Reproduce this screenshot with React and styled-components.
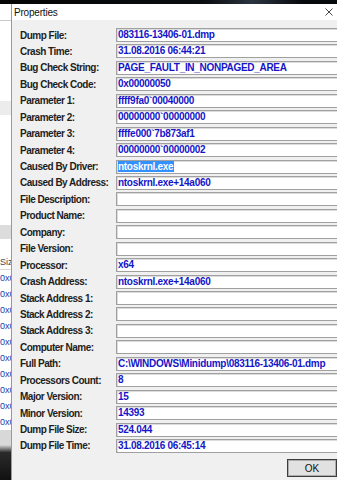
import React from "react";
import styled, { createGlobalStyle } from "styled-components";

const GlobalStyle = createGlobalStyle`
  html, body { margin: 0; padding: 0; background: #0b0d10; overflow: hidden; }
  * { box-sizing: border-box; }
`;

const Screen = styled.div`
  width: 337px;
  height: 480px;
  display: flex;
  flex-direction: column;
  overflow: hidden;
  font-family: "Liberation Sans", Arial, sans-serif;
`;

const TopStrip = styled.div`
  height: 4px;
  flex: none;
  background: linear-gradient(90deg, #050505 0%, #0a0c0e 60%, #2a3440 75%, #07090b 90%);
`;

const Main = styled.div`
  flex: 1;
  display: flex;
  min-height: 0;
`;

const BackWindow = styled.div`
  width: 11px;
  flex: none;
  display: flex;
  flex-direction: column;
  background: #ffffff;
  overflow: hidden;
`;

const BackBand = styled.div`
  height: ${(p) => p.$h}px;
  flex: none;
  background: ${(p) => p.$bg || "#ffffff"};
  border-bottom: ${(p) => (p.$line ? "1px solid #c8c8c8" : "none")};
`;

const BackCell = styled.div`
  height: 16px;
  flex: none;
  font-size: 9px;
  line-height: 16px;
  color: ${(p) => (p.$head ? "#444" : "#1a3aa8")};
  white-space: nowrap;
  padding-left: 0;
  border-bottom: 1px solid ${(p) => (p.$head ? "#d8d8d8" : "#ffffff")};
`;

const Desktop = styled.div`
  flex: 1;
  background: linear-gradient(180deg, #d8d8d8 0%, #d8d8d8 30%, #2a2a2a 45%, #111 100%);
`;

const Dialog = styled.div`
  flex: 1;
  display: flex;
  flex-direction: column;
  background: #f0f0f0;
  border-left: 1px solid #9a9a9a;
  min-width: 0;
`;

const TitleBar = styled.div`
  height: 16px;
  flex: none;
  background: #ffffff;
  display: flex;
  align-items: center;
  justify-content: space-between;
  padding: 0 2px 0 2px;
`;

const Title = styled.span`
  font-size: 10px;
  color: #111;
  letter-spacing: -0.2px;
`;

const CloseIcon = styled.svg`
  width: 8px;
  height: 8px;
  margin-right: 2px;
`;

const Body = styled.div`
  flex: 1;
  display: flex;
  flex-direction: column;
  padding: 6.8px 0 0 8px;
`;

const Grid = styled.div`
  display: grid;
  grid-template-columns: 96px 250px;
  grid-auto-rows: 16.44px;
  align-items: center;
`;

const Label = styled.div`
  font-size: 10px;
  font-weight: bold;
  color: #1e1e1e;
  letter-spacing: -0.5px;
  white-space: nowrap;
`;

const Field = styled.div`
  height: 14px;
  background: #ffffff;
  border: 1px solid #a0a0a0;
  box-shadow: inset 1px 1px 0 #dcdcdc;
  font-size: 10px;
  font-weight: bold;
  color: #1515c8;
  letter-spacing: -0.3px;
  line-height: 12px;
  padding-left: 1px;
  white-space: nowrap;
  overflow: hidden;
`;

const Selected = styled.span`
  background: #3390ff;
  color: #ffffff;
  padding-right: 1px;
`;

const Footer = styled.div`
  display: flex;
  justify-content: flex-end;
  padding-top: 5px;
`;

const OkButton = styled.button`
  width: 50px;
  height: 18px;
  background: #e1e1e1;
  border: 1px solid #3c3c3c;
  box-shadow: inset 0 0 0 1px #adadad;
  font-family: "Liberation Sans", Arial, sans-serif;
  font-size: 10px;
  color: #111;
  padding: 0;
`;

const rows = [
  ["Dump File:", "083116-13406-01.dmp"],
  ["Crash Time:", "31.08.2016 06:44:21"],
  ["Bug Check String:", "PAGE_FAULT_IN_NONPAGED_AREA"],
  ["Bug Check Code:", "0x00000050"],
  ["Parameter 1:", "ffff9fa0`00040000"],
  ["Parameter 2:", "00000000`00000000"],
  ["Parameter 3:", "ffffe000`7b873af1"],
  ["Parameter 4:", "00000000`00000002"],
  ["Caused By Driver:", "ntoskrnl.exe", true],
  ["Caused By Address:", "ntoskrnl.exe+14a060"],
  ["File Description:", ""],
  ["Product Name:", ""],
  ["Company:", ""],
  ["File Version:", ""],
  ["Processor:", "x64"],
  ["Crash Address:", "ntoskrnl.exe+14a060"],
  ["Stack Address 1:", ""],
  ["Stack Address 2:", ""],
  ["Stack Address 3:", ""],
  ["Computer Name:", ""],
  ["Full Path:", "C:\\WINDOWS\\Minidump\\083116-13406-01.dmp"],
  ["Processors Count:", "8"],
  ["Major Version:", "15"],
  ["Minor Version:", "14393"],
  ["Dump File Size:", "524.044"],
  ["Dump File Time:", "31.08.2016 06:45:14"],
];

export default function App() {
  return (
    <>
      <GlobalStyle />
      <Screen>
        <TopStrip />
        <Main>
          <BackWindow>
            <BackBand $h={17} $line />
            <BackBand $h={80} />
            <BackBand $h={14} $bg="#ececec" />
            <BackBand $h={110} />
            <BackBand $h={14} $bg="#dcdcdc" />
            <BackBand $h={15} />
            <BackCell $head>Size</BackCell>
            {Array.from({ length: 10 }).map((_, i) => (
              <BackCell key={i}>0x0</BackCell>
            ))}
            <Desktop />
          </BackWindow>
          <Dialog>
            <TitleBar>
              <Title>Properties</Title>
              <CloseIcon viewBox="0 0 8 8">
                <path d="M0.5 0.5 L7.5 7.5 M7.5 0.5 L0.5 7.5" stroke="#333" strokeWidth="0.9" fill="none" />
              </CloseIcon>
            </TitleBar>
            <Body>
              <Grid>
                {rows.map(([label, value, sel]) => (
                  <React.Fragment key={label}>
                    <Label>{label}</Label>
                    <Field>{sel ? <Selected>{value}</Selected> : value}</Field>
                  </React.Fragment>
                ))}
              </Grid>
              <Footer>
                <OkButton>OK</OkButton>
              </Footer>
            </Body>
          </Dialog>
        </Main>
      </Screen>
    </>
  );
}
